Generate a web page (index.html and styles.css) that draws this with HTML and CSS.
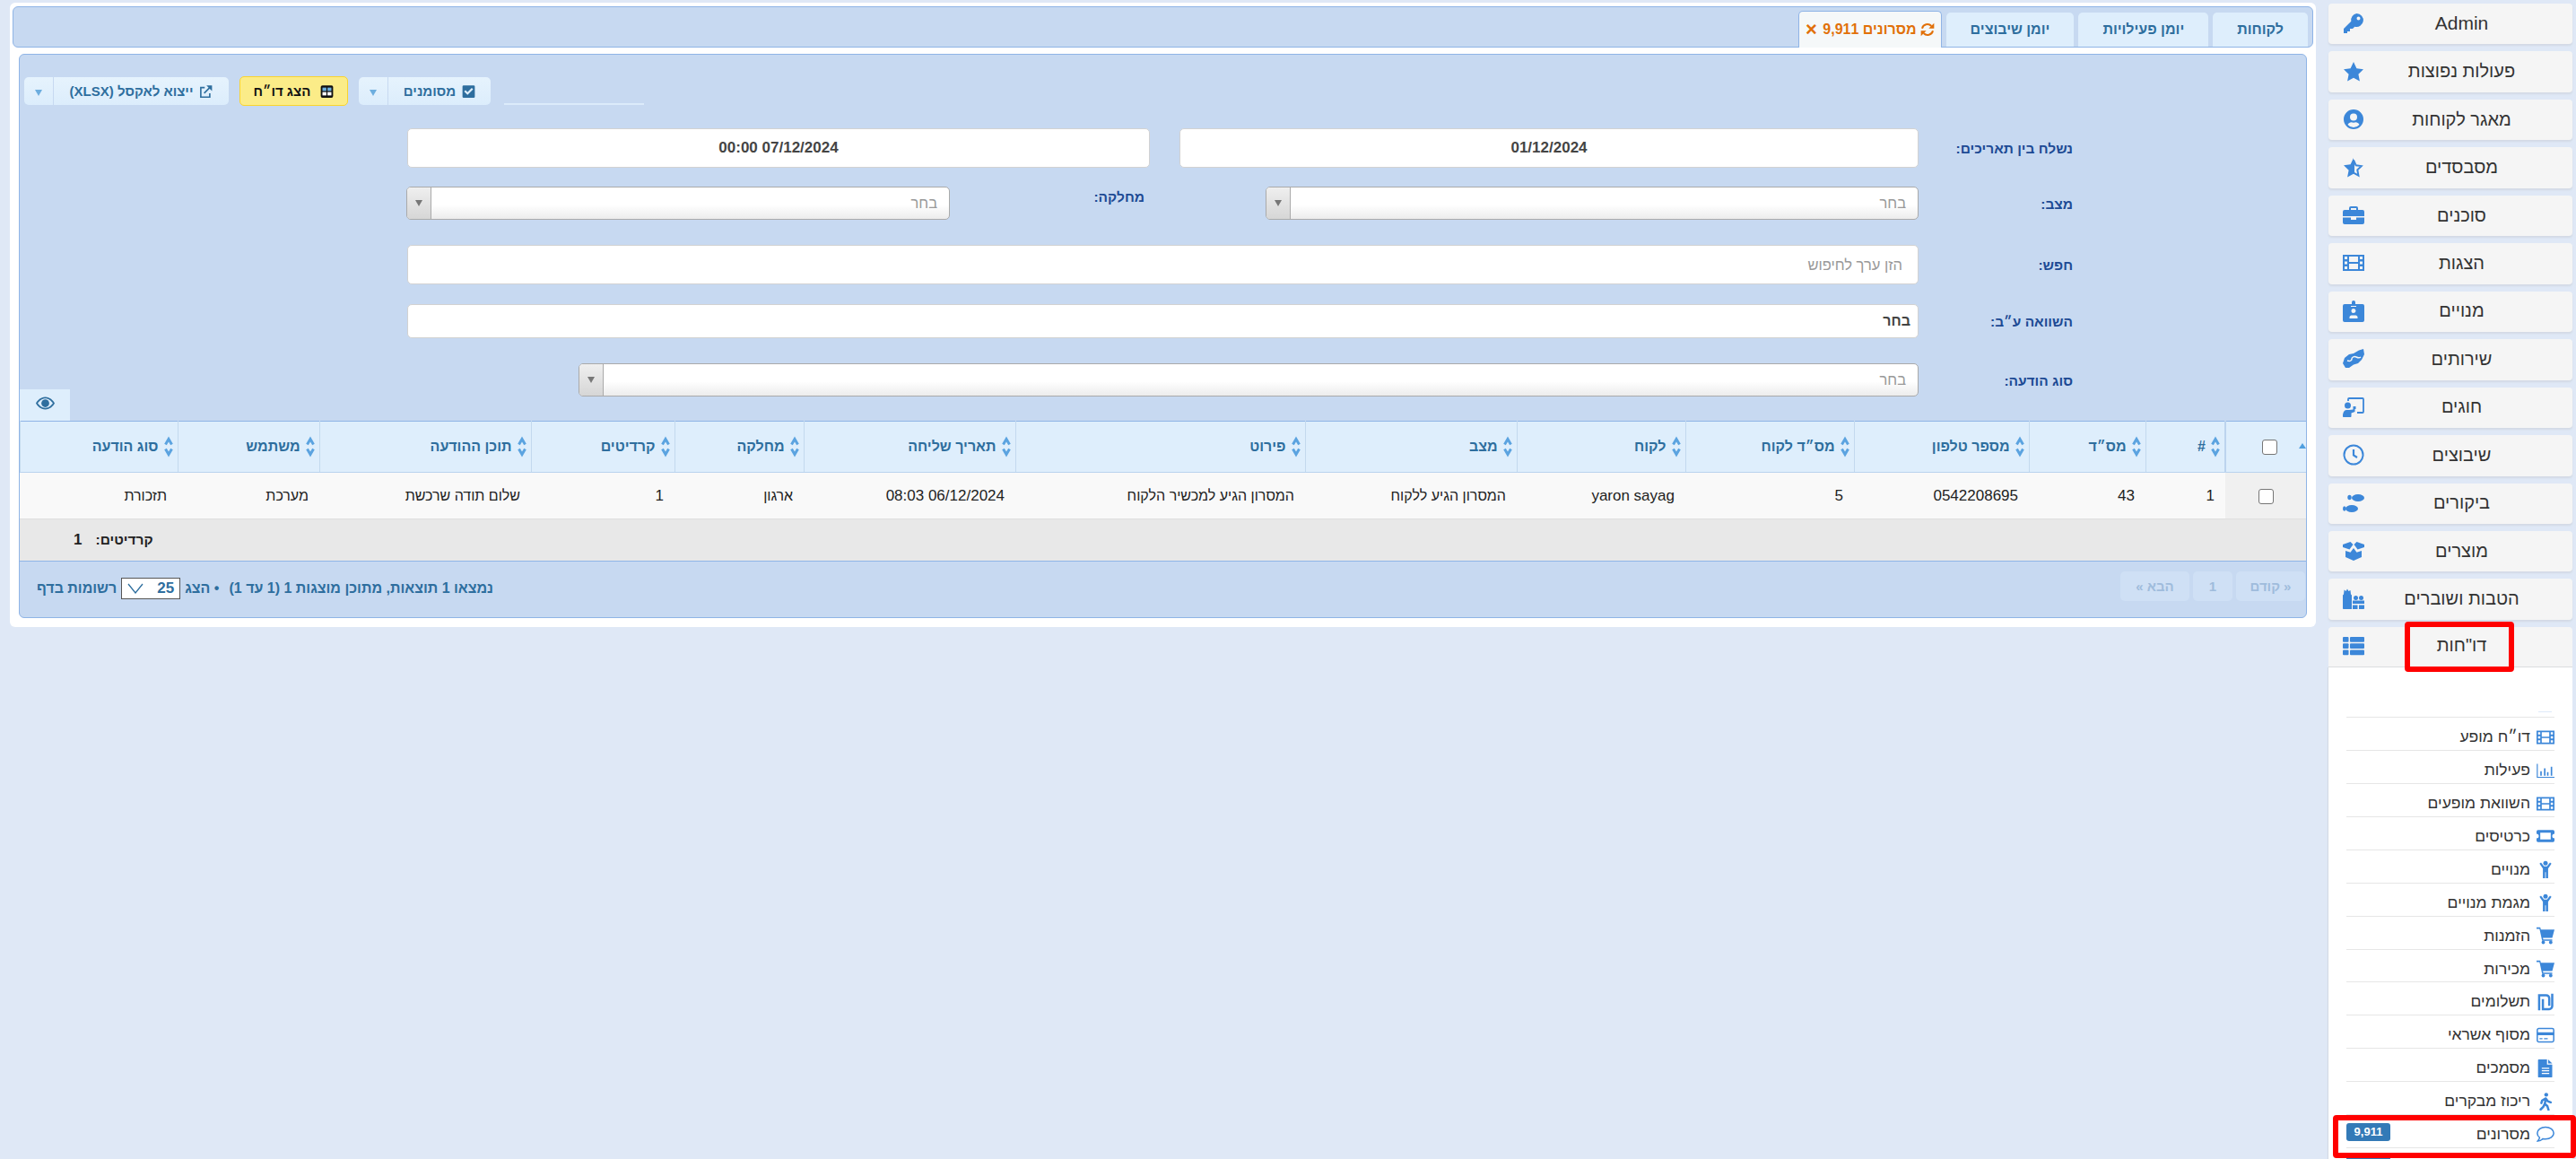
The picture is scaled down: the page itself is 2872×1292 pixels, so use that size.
FILE: index.html
```html
<!DOCTYPE html>
<html lang="he" dir="rtl">

<head>
     <meta charset="UTF-8">
     <title>מסרונים</title>
     <link rel="stylesheet" href="styles.css">
</head>

<body>
     <svg class="defs" width="0" height="0">
          <symbol id="i-key" viewBox="0 0 24 24"><path fill-rule="evenodd" d="M15.500 1a7.500 7.500 0 1 1-2.200 14.700L11 18H8v3H5v2H1v-5l8.300-8.300A7.500 7.500 0 0 1 15.500 1zm2 3.500a2 2 0 1 0 0 4 2 2 0 0 0 0-4z"/></symbol>
          <symbol id="i-star" viewBox="0 0 24 24"><path d="M12 1l3.400 7.300 7.600 1-5.600 5.400 1.500 7.800-6.900-3.800-6.900 3.800 1.500-7.800L1 9.300l7.600-1z"/></symbol>
          <symbol id="i-user" viewBox="0 0 24 24"><path fill-rule="evenodd" d="M12 1a11 11 0 1 0 0 22 11 11 0 0 0 0-22zm0 4.500a4 4 0 1 1 0 8 4 4 0 0 1 0-8zm0 15.500a8.500 8.500 0 0 1-6.500-3c.9-1.800 2.600-2.700 4-2.700.8.300 1.600.5 2.500.5s1.700-.2 2.500-.5c1.400 0 3.100.9 4 2.700a8.500 8.500 0 0 1-6.500 3z"/></symbol>
          <symbol id="i-star-half" viewBox="0 0 24 24"><path d="M12 1L8.600 8.300l-7.600 1 5.600 5.400-1.500 7.800 6.900-3.800z"/><path fill="none" stroke="currentColor" stroke-width="2" d="M12 3.500l2.700 5.800 6 .8-4.400 4.300 1.100 6.200-5.400-3z"/></symbol>
          <symbol id="i-briefcase" viewBox="0 0 24 24"><path fill-rule="evenodd" d="M9 2h6a2 2 0 0 1 2 2v2h5a2 2 0 0 1 2 2v5H0V8a2 2 0 0 1 2-2h5V4a2 2 0 0 1 2-2zm0 2v2h6V4z"/><path d="M0 14.500h9V17h6v-2.500h9V20a2 2 0 0 1-2 2H2a2 2 0 0 1-2-2z"/></symbol>
          <symbol id="i-film" viewBox="0 0 24 24"><path fill-rule="evenodd" d="M0 3h24v18H0zM2 5v3h3V5zM2 10.500v3h3v-3zM2 16v3h3v-3zM19 5v3h3V5zM19 10.500v3h3v-3zM19 16v3h3v-3zM7 5v6h10V5zM7 13v6h10v-6z"/></symbol>
          <symbol id="i-badge" viewBox="0 0 24 24"><path fill-rule="evenodd" d="M2 4h8V2a2 2 0 0 1 4 0v2h8a2 2 0 0 1 2 2v16a2 2 0 0 1-2 2H2a2 2 0 0 1-2-2V6a2 2 0 0 1 2-2zM12 9a2.500 2.500 0 1 0 0 5 2.500 2.500 0 0 0 0-5zM7.500 20h9v-1.500c0-1-1-2-2-2h-5c-1 0-2 1-2 2zM9 6v1h6V6z"/></symbol>
          <symbol id="i-hands" viewBox="0 0 24 24"><path d="M0 17l2-6 5-4 5-1 6-3.500L23 1l1 6-3 6-4 4-5 1.500L7 22H3z"/><path fill="none" stroke="#f5f5f5" stroke-width="1.500" d="M5 14c3 1 5 0 5-2s3-3 5-2 4 1 5 0"/></symbol>
          <symbol id="i-teacher" viewBox="0 0 24 24"><circle cx="5.500" cy="10" r="3.500"/><path d="M0 22c0-4 1.500-7 4-7h3l4.500-.5V11h3v3h-1v3l-4 1.500V22c0 .6-.4 1-1 1H1c-.6 0-1-.4-1-1z"/><path fill="none" stroke="currentColor" stroke-width="1.800" d="M6 5V3c0-.6.400-1 1-1h15c.6 0 1 .4 1 1v14c0 .6-.4 1-1 1H16"/></symbol>
          <symbol id="i-clock" viewBox="0 0 24 24"><circle cx="12" cy="12" r="10.500" fill="none" stroke="currentColor" stroke-width="2"/><path fill="none" stroke="currentColor" stroke-width="2.200" d="M12 6v6.500l4 2.500"/></symbol>
          <symbol id="i-shoes" viewBox="0 0 24 24"><ellipse cx="17" cy="6" rx="7" ry="4"/><ellipse cx="7.500" cy="5.500" rx="2.200" ry="2.700"/><ellipse cx="10" cy="18" rx="7" ry="4"/><ellipse cx="1.800" cy="18" rx="1.800" ry="2.700"/></symbol>
          <symbol id="i-box" viewBox="0 0 24 24"><path d="M3 12l5.500 1.800L12 9l3.500 4.800L21 12v7l-9 4-9-4z"/><path d="M0 5l8.500-3L11.500 5 7.500 10.500 0 8z"/><path d="M24 5l-8.500-3L12.500 5l4 5.500L24 8z"/></symbol>
          <symbol id="i-gifts" viewBox="0 0 24 24"><path d="M1 6.500l.6-5 1.900 1.500L5 .5l1.500 2.500L8.500 2l.5 4.500 1 1v15.500H1c-.6 0-1-.4-1-1V7.500z"/><path d="M11 13.500h13V17H11zM11 18.500h5.500V23H11zM18 18.500h6V22c0 .6-.4 1-1 1h-5z"/><circle cx="14.500" cy="10.500" r="2.500"/><circle cx="20.500" cy="10.500" r="2.500"/></symbol>
          <symbol id="i-list" viewBox="0 0 24 24"><rect x="0" y="2" width="6.500" height="5.800" rx="1"/><rect x="8" y="2" width="16" height="5.800" rx="1"/><rect x="0" y="9.200" width="6.500" height="5.800" rx="1"/><rect x="8" y="9.200" width="16" height="5.800" rx="1"/><rect x="0" y="16.400" width="6.500" height="5.800" rx="1"/><rect x="8" y="16.400" width="16" height="5.800" rx="1"/></symbol>
          <symbol id="i-chart" viewBox="0 0 24 24"><path fill="none" stroke="currentColor" stroke-width="1.400" d="M1 3v18h23"/><path d="M5 13h2v6H5zM10 9h2v10h-2zM14 14h2v5h-2zM19 7h2v12h-2z"/></symbol>
          <symbol id="i-ticket" viewBox="0 0 24 24"><path fill-rule="evenodd" d="M0 6a2 2 0 0 1 2-2h20a2 2 0 0 1 2 2v3a3 3 0 0 0 0 6v3a2 2 0 0 1-2 2H2a2 2 0 0 1-2-2v-3a3 3 0 0 0 0-6zM5 7.500v9h14v-9z"/></symbol>
          <symbol id="i-child" viewBox="0 0 24 24"><circle cx="12" cy="4" r="3"/><path d="M6 3l4 5h4l4-5 2 1.500-4.500 6.500v13h-3v-8h-1v8h-3V11L4 4.500z"/></symbol>
          <symbol id="i-cart" viewBox="0 0 24 24"><path d="M0 1h5l.8 3H24l-3 11H8.500l.5 2h12v2H7.500L4 3H0z"/><circle cx="9" cy="21" r="2.300"/><circle cx="19" cy="21" r="2.300"/></symbol>
          <symbol id="i-shekel" viewBox="0 0 24 24"><path fill="none" stroke="currentColor" stroke-width="3" d="M3.500 23V3H13a4 4 0 0 1 4 4v10M8.500 8v13.500H17a4 4 0 0 0 4-4V1"/></symbol>
          <symbol id="i-card" viewBox="0 0 24 24"><rect x="1" y="3" width="22" height="18" rx="2" fill="none" stroke="currentColor" stroke-width="1.800"/><path d="M1 8h22v4H1zM4 16h4v1.500H4zM10 16h5v1.500h-5z"/></symbol>
          <symbol id="i-file" viewBox="0 0 24 24"><path fill-rule="evenodd" d="M3 0h11v7h7v16a1 1 0 0 1-1 1H3a1 1 0 0 1-1-1V1a1 1 0 0 1 1-1zM7 11v1.500h10V11zM7 14.500V16h10v-1.500zM7 18v1.500h10V18z"/><path d="M15.500 0L21 5.500h-5.500z"/></symbol>
          <symbol id="i-walk" viewBox="0 0 24 24"><circle cx="13" cy="2.800" r="2.600"/><path fill="none" stroke="currentColor" stroke-width="3" stroke-linecap="round" stroke-linejoin="round" d="M12.500 8l-1.500 7 3.500 3 1.500 5M12 8L7.500 10.500 6.500 14M12.500 8l2.500 3.500 4 1.500M10.500 16L9 19l-3.500 3.500"/></symbol>
          <symbol id="i-comment" viewBox="0 0 24 24"><path fill="none" stroke="currentColor" stroke-width="1.800" d="M12 3c6 0 11 3.500 11 8s-5 8-11 8c-1.300 0-2.500-.2-3.600-.5C7 20 5 21.500 1.500 21.500c1.500-1.500 2.500-3.500 2.600-4.700C2 15.300 1 13.200 1 11c0-4.500 5-8 11-8z"/></symbol>
          <symbol id="i-sync" viewBox="0 0 24 24"><path fill="none" stroke="currentColor" stroke-width="3" d="M3 10a9 9 0 0 1 15.500-4M21 14a9 9 0 0 1-15.500 4"/><path d="M23 1v9h-9zM1 23v-9h9z"/></symbol>
          <symbol id="i-check" viewBox="0 0 24 24"><path fill-rule="evenodd" d="M3 1h18a2 2 0 0 1 2 2v18a2 2 0 0 1-2 2H3a2 2 0 0 1-2-2V3a2 2 0 0 1 2-2zM10 18l10-10-2.500-2.500L10 13 6.500 9.500 4 12z"/></symbol>
          <symbol id="i-link" viewBox="0 0 24 24"><path fill="none" stroke="currentColor" stroke-width="2.600" d="M10 5H3v17h16v-7M9 15L21 3"/><path d="M13 1h10v10z"/></symbol>
          <symbol id="i-eye" viewBox="0 0 24 24"><path fill-rule="evenodd" d="M12 4c6 0 10 4.500 12 8-2 3.500-6 8-12 8S2 15.500 0 12c2-3.500 6-8 12-8zm0 2c-4.500 0-7.700 3.200-9.600 6 1.900 2.800 5.100 6 9.600 6s7.700-3.200 9.600-6c-1.900-2.800-5.100-6-9.600-6z"/><path d="M12 7a5 5 0 1 0 0 10 5 5 0 0 0 0-10z"/></symbol>
          <symbol id="i-sort" viewBox="0 0 10 24"><path fill="none" stroke="currentColor" stroke-width="3" d="M1.500 9.500L5 3.500l3.500 6M1.500 14.500l3.500 6 3.500-6"/></symbol>
     </svg>

     <div class="page">
          <div class="sidebar">
               <div class="side-item"><svg class="side-icon"><use href="#i-key"/></svg><span class="latin">Admin</span></div>
               <div class="side-item"><svg class="side-icon"><use href="#i-star"/></svg><span>פעולות נפוצות</span></div>
               <div class="side-item"><svg class="side-icon"><use href="#i-user"/></svg><span>מאגר לקוחות</span></div>
               <div class="side-item"><svg class="side-icon"><use href="#i-star-half"/></svg><span>מסבסדים</span></div>
               <div class="side-item"><svg class="side-icon"><use href="#i-briefcase"/></svg><span>סוכנים</span></div>
               <div class="side-item"><svg class="side-icon"><use href="#i-film"/></svg><span>הצגות</span></div>
               <div class="side-item"><svg class="side-icon"><use href="#i-badge"/></svg><span>מנויים</span></div>
               <div class="side-item"><svg class="side-icon"><use href="#i-hands"/></svg><span>שירותים</span></div>
               <div class="side-item"><svg class="side-icon"><use href="#i-teacher"/></svg><span>חוגים</span></div>
               <div class="side-item"><svg class="side-icon"><use href="#i-clock"/></svg><span>שיבוצים</span></div>
               <div class="side-item"><svg class="side-icon"><use href="#i-shoes"/></svg><span>ביקורים</span></div>
               <div class="side-item"><svg class="side-icon"><use href="#i-box"/></svg><span>מוצרים</span></div>
               <div class="side-item"><svg class="side-icon"><use href="#i-gifts"/></svg><span>הטבות ושוברים</span></div>
               <div class="side-item open"><svg class="side-icon"><use href="#i-list"/></svg><span>דו"חות</span></div>
               <ul class="sub-menu">
                    <li class="sub-first"><i class="sub-mark"></i></li>
                    <li><svg class="sub-icon"><use href="#i-film"/></svg><span>דו״ח מופע</span></li>
                    <li><svg class="sub-icon"><use href="#i-chart"/></svg><span>פעילות</span></li>
                    <li><svg class="sub-icon"><use href="#i-film"/></svg><span>השוואת מופעים</span></li>
                    <li><svg class="sub-icon"><use href="#i-ticket"/></svg><span>כרטיסים</span></li>
                    <li><svg class="sub-icon"><use href="#i-child"/></svg><span>מנויים</span></li>
                    <li><svg class="sub-icon"><use href="#i-child"/></svg><span>מגמת מנויים</span></li>
                    <li><svg class="sub-icon"><use href="#i-cart"/></svg><span>הזמנות</span></li>
                    <li><svg class="sub-icon"><use href="#i-cart"/></svg><span>מכירות</span></li>
                    <li><svg class="sub-icon"><use href="#i-shekel"/></svg><span>תשלומים</span></li>
                    <li><svg class="sub-icon"><use href="#i-card"/></svg><span>מסוף אשראי</span></li>
                    <li><svg class="sub-icon"><use href="#i-file"/></svg><span>מסמכים</span></li>
                    <li><svg class="sub-icon"><use href="#i-walk"/></svg><span>ריכוז מבקרים</span></li>
                    <li><svg class="sub-icon"><use href="#i-comment"/></svg><span>מסרונים</span><b class="count">9,911</b></li>
                    <li><b class="count"></b></li>
               </ul>
          </div>

          <div class="main">
               <div class="tabs">
                    <a class="tab">לקוחות</a>
                    <a class="tab">יומן פעילויות</a>
                    <a class="tab">יומן שיבוצים</a>
                    <a class="tab active"><svg class="tab-sync"><use href="#i-sync"/></svg>מסרונים 9,911 <span class="tab-close">×</span></a>
               </div>

               <div class="panel">
                    <div class="toolbar">
                         <div class="tool-line"></div>
                         <div class="split">
                              <button class="split-main"><svg class="btn-icon"><use href="#i-check"/></svg>מסומנים</button>
                              <button class="split-arrow"><i class="caret"></i></button>
                         </div>
                         <button class="btn-show">
                              <svg class="btn-icon" viewBox="0 0 24 24"><rect x="1" y="1" width="22" height="22" rx="3" fill="#111"/><rect x="4" y="5" width="7" height="6" fill="#6ab0e0"/><rect x="13" y="5" width="7" height="6" fill="#6ab0e0"/><rect x="4" y="13" width="7" height="6" fill="#fff"/><rect x="13" y="13" width="7" height="6" fill="#fff"/></svg>
                              הצג דו״ח
                         </button>
                         <div class="split split-excel">
                              <button class="split-main"><svg class="btn-icon"><use href="#i-link"/></svg>ייצוא לאקסל (XLSX)</button>
                              <button class="split-arrow"><i class="caret"></i></button>
                         </div>
                    </div>

                    <div class="form-row row-1">
                         <label>נשלח בין תאריכים:</label>
                         <div class="field date date-from">01/12/2024</div>
                         <div class="field date date-to">07/12/2024 00:00</div>
                    </div>
                    <div class="form-row row-2">
                         <label>מצב:</label>
                         <div class="combo combo-status"><span>בחר</span><i class="combo-handle"><i class="caret gray"></i></i></div>
                         <label class="label-dept">מחלקה:</label>
                         <div class="combo combo-dept"><span>בחר</span><i class="combo-handle"><i class="caret gray"></i></i></div>
                    </div>
                    <div class="form-row row-3">
                         <label>חפש:</label>
                         <div class="field search">הזן ערך לחיפוש</div>
                    </div>
                    <div class="form-row row-4">
                         <label>השוואה ע״ב:</label>
                         <div class="field compare">בחר</div>
                    </div>
                    <div class="form-row row-5">
                         <label>סוג הודעה:</label>
                         <div class="combo combo-type"><span>בחר</span><i class="combo-handle"><i class="caret gray"></i></i></div>
                    </div>
                    <div class="eye-row">
                         <div class="eye-tab"><svg class="eye-icon"><use href="#i-eye"/></svg></div>
                    </div>

                    <table class="grid">
                         <colgroup>
                              <col class="c-chk"><col class="c-num"><col class="c-id"><col class="c-phone"><col class="c-cust">
                              <col class="c-name"><col class="c-state"><col class="c-detail"><col class="c-date"><col class="c-dept">
                              <col class="c-cred"><col class="c-text"><col class="c-user"><col class="c-type">
                         </colgroup>
                         <thead>
                              <tr>
                                   <th class="th-chk"><i class="caret sort-up"></i><input type="checkbox" class="chk"></th>
                                   <th><svg class="sort"><use href="#i-sort"/></svg>#</th>
                                   <th><svg class="sort"><use href="#i-sort"/></svg>מס״ד</th>
                                   <th><svg class="sort"><use href="#i-sort"/></svg>מספר טלפון</th>
                                   <th><svg class="sort"><use href="#i-sort"/></svg>מס״ד לקוח</th>
                                   <th><svg class="sort"><use href="#i-sort"/></svg>לקוח</th>
                                   <th><svg class="sort"><use href="#i-sort"/></svg>מצב</th>
                                   <th><svg class="sort"><use href="#i-sort"/></svg>פירוט</th>
                                   <th><svg class="sort"><use href="#i-sort"/></svg>תאריך שליחה</th>
                                   <th><svg class="sort"><use href="#i-sort"/></svg>מחלקה</th>
                                   <th><svg class="sort"><use href="#i-sort"/></svg>קרדיטים</th>
                                   <th><svg class="sort"><use href="#i-sort"/></svg>תוכן ההודעה</th>
                                   <th><svg class="sort"><use href="#i-sort"/></svg>משתמש</th>
                                   <th><svg class="sort"><use href="#i-sort"/></svg>סוג הודעה</th>
                              </tr>
                         </thead>
                         <tbody>
                              <tr>
                                   <td class="td-chk"><input type="checkbox" class="chk"></td>
                                   <td class="num">1</td>
                                   <td class="num">43</td>
                                   <td class="num">0542208695</td>
                                   <td class="num">5</td>
                                   <td class="num">yaron sayag</td>
                                   <td>המסרון הגיע ללקוח</td>
                                   <td>המסרון הגיע למכשיר הלקוח</td>
                                   <td class="num">06/12/2024 08:03</td>
                                   <td>ארגון</td>
                                   <td class="num">1</td>
                                   <td>שלום תודה שרכשת</td>
                                   <td>מערכת</td>
                                   <td>תזכורת</td>
                              </tr>
                         </tbody>
                         <tfoot>
                              <tr>
                                   <td colspan="14"><b>קרדיטים:</b><b class="total-val">1</b></td>
                              </tr>
                         </tfoot>
                    </table>

                    <div class="pager-bar">
                         <div class="pager">
                              <a>« קודם</a>
                              <a class="pager-num">1</a>
                              <a>הבא »</a>
                         </div>
                         <div class="pager-info">
                              <span>נמצאו 1 תוצאות, מתוכן מוצגות 1 (1 עד 1)</span>
                              <span class="show-count">• הצג</span>
                              <span class="per-page">25<svg class="per-arrow" viewBox="0 0 18 12"><path fill="none" stroke="#2e6e9e" stroke-width="1.300" d="M1 1l8 10 8-10"/></svg></span>
                              <span>רשומות בדף</span>
                         </div>
                    </div>
               </div>
          </div>
     </div>

     <div class="mark mark-reports"></div>
     <div class="mark mark-sms"></div>
</body>

</html>
```

FILE: styles.css
```css
* {
     margin: 0px;
     padding: 0px;
     box-sizing: border-box;
     font-family: "Liberation Sans", Arial, sans-serif;
}

html, body {
     height: 100%;
     overflow: hidden;
}

body {
     background-color: #dfe8f6;
     position: relative;
}

.defs {
     position: absolute;
}

.page {
     display: flex;
     align-items: flex-start;
     gap: 14px;
     padding: 3px 4px 0px 11px;
}

/* sidebar */
.sidebar {
     width: 272px;
     flex-shrink: 0;
     margin-top: 1px;
     display: flex;
     flex-direction: column;
     gap: 8px;
}

.side-item {
     display: flex;
     align-items: center;
     height: 45.46px;
     padding: 0px 16px 1px 15px;
     background-color: #f5f5f5;
     border-radius: 4px;
     box-shadow: 0px 2px 2px #d3dae5;
     color: #333;
     font-size: 20px;
     direction: ltr;
}

.side-item span {
     flex: 1;
     text-align: center;
     direction: rtl;
}

.side-item .latin {
     font-size: 21px;
}

.side-icon {
     width: 26px;
     height: 24px;
     fill: #3c87d9;
     color: #3c87d9;
     flex-shrink: 0;
}

.side-item.open {
     padding-bottom: 3px;
     border-radius: 4px 4px 0px 0px;
     box-shadow: none;
     border-bottom: 1px solid #dcdcdc;
}

.sub-menu {
     list-style: none;
     background-color: #fff;
     margin-top: -8px;
     padding: 0px 20px;
     height: 560px;
     box-shadow: -1px 0px 1px #d3dae5;
}

.sub-menu li {
     display: flex;
     align-items: center;
     gap: 7px;
     height: 36.9px;
     padding-top: 7px;
     border-bottom: 1px solid #e6e6e6;
     font-size: 17.5px;
     color: #333;
}

.sub-menu li.sub-first {
     height: 56px;
     align-items: flex-end;
     padding: 0px 3px 5px 0px;
}

.sub-mark {
     display: block;
     width: 15px;
     height: 1px;
     background-color: #dfeafa;
}

.sub-icon {
     width: 20px;
     height: 20px;
     fill: #3c87d9;
     color: #3c87d9;
     flex-shrink: 0;
}

.count {
     margin-right: auto;
     margin-top: -4px;
     width: 49px;
     height: 20px;
     line-height: 19px;
     background-color: #337ab7;
     color: #fff;
     font-size: 13px;
     text-align: center;
     border-radius: 3px;
}

/* main card */
.main {
     flex: 1;
     min-width: 0;
     height: 696px;
     background-color: #fff;
     border-radius: 6px;
     padding: 4px 3px 0px 3px;
}

.tabs {
     display: flex;
     align-items: flex-end;
     gap: 5px;
     height: 46px;
     padding: 0px 5px 0px 0px;
     background-color: #c7d9f1;
     border: 1px solid #8fb4e6;
     border-radius: 6px;
}

.tab {
     height: 38px;
     line-height: 38px;
     padding: 0px 27px;
     background-color: #deeefc;
     border-radius: 5px 5px 0px 0px;
     color: #2e6e9e;
     font-size: 16px;
     font-weight: bold;
     white-space: nowrap;
}

.tab.active {
     height: 41px;
     margin-bottom: -1px;
     line-height: 39px;
     padding: 0px 7px;
     background-color: #f5f8f9;
     border: 1px solid #8fb4e6;
     border-bottom: none;
     color: #e17009;
}

.tab-sync {
     width: 16px;
     height: 16px;
     fill: #e17009;
     color: #e17009;
     vertical-align: -3px;
     margin-left: 4px;
}

.tab-close {
     font-size: 22px;
     vertical-align: -2px;
     margin-right: 2px;
}

/* filter panel */
.panel {
     margin: 7px 7px 0px 7px;
     height: 629px;
     background-color: #c7d9f1;
     border: 1px solid #8fb4e6;
     border-radius: 6px;
     overflow: hidden;
}

.toolbar {
     display: flex;
     align-items: center;
     justify-content: flex-end;
     gap: 12px;
     height: 33px;
     margin-top: 24px;
     padding-left: 5px;
}

.tool-line {
     width: 156px;
     height: 2px;
     margin: 29px 0px 0px 3px;
     background-color: #dcebfa;
}

.split {
     display: flex;
     gap: 1px;
     height: 31px;
     width: 147px;
     flex-shrink: 0;
}

.split-excel {
     width: 228px;
}

.split button {
     border: none;
     background: linear-gradient(#e6f3fd, #dcedfc);
     color: #2e6e9e;
     font-size: 15px;
     font-weight: bold;
}

.split-main {
     flex: 1;
     border-radius: 0px 5px 5px 0px;
}

.split-arrow {
     width: 32px;
     border-radius: 5px 0px 0px 5px;
}

.btn-icon {
     width: 15px;
     height: 16px;
     fill: #2e6e9e;
     color: #2e6e9e;
     vertical-align: -3px;
     margin-left: 7px;
}

.btn-show {
     width: 121px;
     height: 33px;
     flex-shrink: 0;
     background-color: #fbec88;
     border: 1px solid #fad42e;
     border-radius: 5px;
     color: #111;
     font-size: 15px;
     font-weight: bold;
}

.caret {
     display: inline-block;
     width: 0px;
     height: 0px;
     border-left: 4.500px solid transparent;
     border-right: 4.500px solid transparent;
     border-top: 7px solid #6daedf;
}

.caret.gray {
     border-top-color: #777;
}

.form-row {
     display: flex;
     align-items: center;
     padding-right: 260px;
}

.form-row label {
     width: 172px;
     flex-shrink: 0;
     padding-top: 2px;
     color: #1d4a94;
     font-size: 15.500px;
     font-weight: bold;
}

.field {
     background-color: #fff;
     border: 1px solid #d2d2d2;
     border-radius: 5px;
     font-size: 16.500px;
}

.date {
     height: 44px;
     line-height: 42px;
     text-align: center;
     font-size: 17px;
     font-weight: bold;
     color: #444;
}

.row-1 { margin-top: 25px; }
.row-2 { margin-top: 21px; }
.row-3 { margin-top: 28px; }
.row-4 { margin-top: 22px; }
.row-5 { margin-top: 28px; }

.date-from { width: 824px; }
.date-to { width: 828px; margin-right: 33px; }

.search {
     width: 1685px;
     height: 44px;
     line-height: 42px;
     padding-right: 17px;
     color: #999;
}

.compare {
     width: 1685px;
     height: 38px;
     line-height: 36px;
     padding-right: 8px;
     color: #444;
     font-weight: bold;
     font-size: 16px;
}

.combo {
     display: flex;
     height: 37px;
     line-height: 35px;
     background: linear-gradient(#fff 55%, #ececec);
     border: 1px solid #aaa;
     border-radius: 5px;
     color: #999;
     font-size: 16.500px;
     overflow: hidden;
}

.combo span {
     flex: 1;
     padding-right: 13px;
}

.combo-handle {
     display: flex;
     align-items: center;
     justify-content: center;
     width: 27px;
     background: linear-gradient(#efefef, #d6d6d6);
     border-right: 1px solid #aaa;
}

.combo-status { width: 728px; }
.combo-dept { width: 606px; }
.combo-type { width: 1494px; }

.form-row .label-dept {
     width: 352px;
     padding-right: 135px;
     margin-top: -16px;
}

.eye-row {
     margin-top: -8px;
     display: flex;
     justify-content: flex-end;
}

.eye-tab {
     width: 56px;
     height: 35px;
     display: flex;
     align-items: center;
     justify-content: center;
     padding-bottom: 5px;
     background-color: #deeefc;
}

.eye-icon {
     width: 21px;
     height: 21px;
     fill: #2e6e9e;
     color: #2e6e9e;
}

/* report table */
.grid {
     width: 2549px;
     table-layout: fixed;
     border-collapse: collapse;
     border-top: 1px solid #8fb4e6;
}

.c-chk { width: 90px; }
.c-num { width: 89px; }
.c-id { width: 130px; }
.c-phone { width: 195px; }
.c-cust { width: 188px; }
.c-name { width: 188px; }
.c-state { width: 236px; }
.c-detail { width: 323px; }
.c-date { width: 236px; }
.c-dept { width: 144px; }
.c-cred { width: 160px; }
.c-text { width: 236px; }
.c-user { width: 158px; }
.c-type { width: 176px; }

.grid th {
     height: 57px;
     padding: 0px 5px 0px 0px;
     background-color: #deeefc;
     border-left: 1px solid #c3d9ee;
     border-bottom: 1px solid #b9d3ee;
     color: #2e6e9e;
     font-size: 16px;
     font-weight: bold;
     text-align: right;
     white-space: nowrap;
}

.sort {
     width: 10px;
     height: 24px;
     fill: #5ba3e0;
     color: #5ba3e0;
     vertical-align: -7px;
     margin-left: 6px;
}

.grid tbody td {
     height: 52px;
     padding: 0px 12px 0px 0px;
     background-color: #f9f9f9;
     border-bottom: 1px solid #dfdfdf;
     color: #222;
     font-size: 16px;
     text-align: right;
     white-space: nowrap;
}

.grid tbody td.num {
     font-size: 17px;
}

.grid tbody td.td-chk {
     background-color: #f0f0f0;
     padding: 0px;
     text-align: center;
}

.grid th.th-chk {
     padding: 0px;
     border-left: 2px solid #bcd4ee;
}

.sort-up {
     border-top: none;
     border-bottom: 6px solid #4f9fdf;
     margin: 0px 0px 3px 24px;
}

.chk {
     appearance: none;
     display: inline-block;
     width: 17px;
     height: 17px;
     background-color: #fff;
     border: 1px solid #767676;
     border-radius: 3px;
     vertical-align: middle;
}

.grid tfoot td {
     height: 47px;
     padding-left: 60px;
     background-color: #e8e8e8;
     border-bottom: 1px solid #8fb4e6;
     color: #222;
     font-size: 15.500px;
     text-align: left;
}

.total-val {
     margin-right: 15px;
     font-size: 17px;
}

.pager-bar {
     display: flex;
     justify-content: space-between;
     align-items: flex-start;
     padding: 11px 1px 0px 19px;
}

.pager {
     display: flex;
     gap: 4px;
}

.pager a {
     display: block;
     height: 33px;
     line-height: 33px;
     width: 77px;
     text-align: center;
     background-color: #cfe0f5;
     border-radius: 5px;
     color: #9fbcdc;
     font-size: 15px;
     font-weight: bold;
}

.pager a.pager-num {
     width: 44px;
}

.pager-info {
     display: flex;
     align-items: center;
     gap: 5px;
     padding-top: 7px;
     color: #2e6e9e;
     font-size: 16px;
     font-weight: bold;
}

.show-count {
     margin-right: 6px;
}

.per-page {
     display: flex;
     align-items: center;
     justify-content: space-between;
     width: 66px;
     height: 24px;
     padding: 0px 6px;
     background-color: #fff;
     border: 1px solid #555;
     font-size: 17px;
}

.per-arrow {
     width: 18px;
     height: 12px;
}

/* red marks drawn over the shot */
.mark {
     position: absolute;
     border: 6px solid #ff0000;
     border-radius: 4px;
}

.mark-reports {
     left: 2681px;
     top: 693px;
     width: 122px;
     height: 56px;
}

.mark-sms {
     left: 2601px;
     top: 1243px;
     width: 271px;
     height: 48px;
}
```
